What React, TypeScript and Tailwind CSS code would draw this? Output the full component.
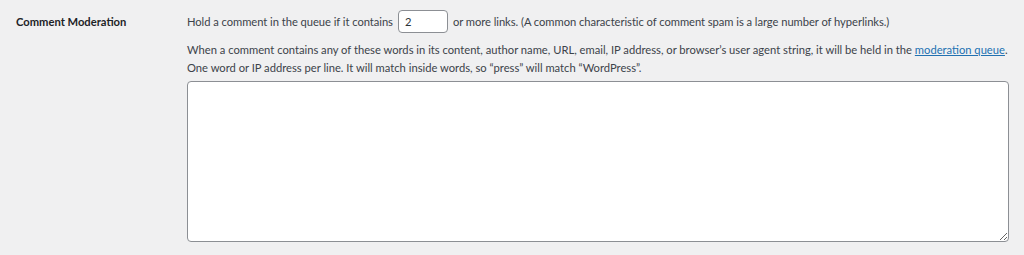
import React from 'react';

export default function App() {
  return (
    <div className="w-[1024px] h-[255px] bg-[#f0f0f1] text-[11.2px] text-[#3c434a] font-['Lato','Liberation_Sans',sans-serif] overflow-hidden">
      <div className="flex pt-[10px]">
        {/* Label column */}
        <div className="w-[187px] shrink-0 pl-4 pt-[3px]">
          <span className="font-bold text-[#1d2327] leading-[18px]">Comment Moderation</span>
        </div>

        {/* Field column */}
        <div className="flex-1 pr-4">
          <p className="flex items-center leading-[18px] tracking-[-0.05px]">
            <span>Hold a comment in the queue if it contains</span>
            <input
              type="text"
              defaultValue="2"
              className="mx-[5px] w-[50px] h-[23px] px-[6px] rounded-[4px] border border-[#8c8f94] bg-white text-[11.2px] text-[#2c3338] outline-none"
            />
            <span>or more links. (A common characteristic of comment spam is a large number of hyperlinks.)</span>
          </p>

          <p className="mt-[8px] leading-[18px]">
            When a comment contains any of these words in its content, author name, URL, email, IP address, or browser’s user agent string, it will be held in the{' '}
            <a href="#" className="text-[#2271b1] underline">moderation queue</a>.
            <br />
            One word or IP address per line. It will match inside words, so “press” will match “WordPress”.
          </p>

          <textarea
            className="block mt-[4px] w-[822px] h-[161px] rounded-[4px] border border-[#8c8f94] bg-white outline-none"
          />
        </div>
      </div>
    </div>
  );
}
